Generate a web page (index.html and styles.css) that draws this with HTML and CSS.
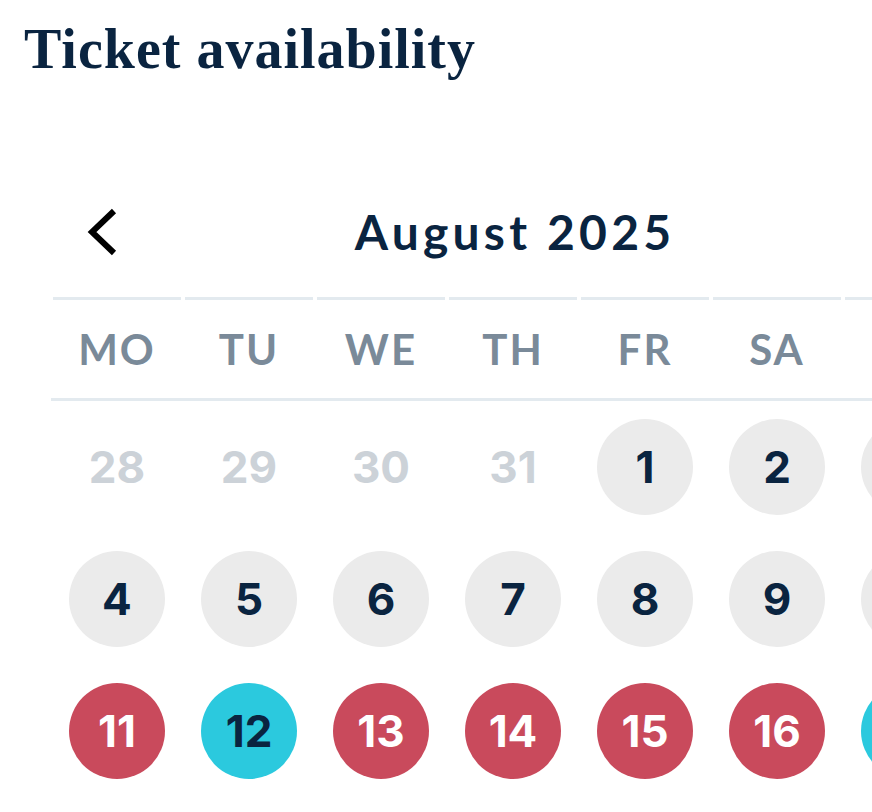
FILE: index.html
```html
<!DOCTYPE html>
<html lang="en">
<head>
<meta charset="utf-8">
<title>Ticket availability</title>
<link rel="stylesheet" href="styles.css">
</head>
<body>
<div class="page">
  <h1 class="title">Ticket availability</h1>
  <section class="calendar">
    <div class="cal-head">
      <button class="nav prev" aria-label="Previous month">
        <svg width="32" height="50" viewBox="0 0 32 50"><polyline points="28,4 6,25 28,46" fill="none" stroke="#000" stroke-width="6" stroke-linecap="butt" stroke-linejoin="miter"/></svg>
      </button>
      <h2 class="month">August 2025</h2>
      <button class="nav next" aria-label="Next month">
        <svg width="32" height="50" viewBox="0 0 32 50"><polyline points="4,4 26,25 4,46" fill="none" stroke="#000" stroke-width="6"/></svg>
      </button>
    </div>
    <div class="weekdays">
      <div class="wd">MO</div>
      <div class="wd">TU</div>
      <div class="wd">WE</div>
      <div class="wd">TH</div>
      <div class="wd">FR</div>
      <div class="wd">SA</div>
      <div class="wd">SU</div>
    </div>
    <div class="days">
      <div class="day"><span class="muted">28</span></div>
      <div class="day"><span class="muted">29</span></div>
      <div class="day"><span class="muted">30</span></div>
      <div class="day"><span class="muted">31</span></div>
      <div class="day"><span class="dot grey">1</span></div>
      <div class="day"><span class="dot grey">2</span></div>
      <div class="day"><span class="dot grey">3</span></div>

      <div class="day"><span class="dot grey">4</span></div>
      <div class="day"><span class="dot grey">5</span></div>
      <div class="day"><span class="dot grey">6</span></div>
      <div class="day"><span class="dot grey">7</span></div>
      <div class="day"><span class="dot grey">8</span></div>
      <div class="day"><span class="dot grey">9</span></div>
      <div class="day"><span class="dot grey">10</span></div>

      <div class="day"><span class="dot red">11</span></div>
      <div class="day"><span class="dot cyan">12</span></div>
      <div class="day"><span class="dot red">13</span></div>
      <div class="day"><span class="dot red">14</span></div>
      <div class="day"><span class="dot red">15</span></div>
      <div class="day"><span class="dot red">16</span></div>
      <div class="day"><span class="dot cyan">17</span></div>
    </div>
  </section>
</div>
</body>
</html>
```
FILE: styles.css
```css
html, body {
  margin: 0;
  padding: 0;
  background: #ffffff;
  overflow: hidden;
}
.page {
  width: 872px;
  height: 812px;
  overflow: hidden;
  box-sizing: border-box;
  padding: 17px 0 0 24px;
}
.title {
  margin: 0;
  font-family: "Liberation Serif", "Times New Roman", serif;
  font-weight: 700;
  font-size: 56px;
  line-height: 64px;
  letter-spacing: 1px;
  color: #0a2440;
  white-space: nowrap;
}
.calendar {
  margin: 121px 0 0 27px;
  width: 924px;
  font-family: "Lato", "Inter", sans-serif;
}
.cal-head {
  display: grid;
  grid-template-columns: 1fr auto 1fr;
  align-items: center;
  height: 60px;
}
.nav {
  background: none;
  border: 0;
  padding: 0;
  width: 32px;
  height: 50px;
  display: block;
  cursor: pointer;
}
.nav svg { display: block; }
.prev { justify-self: start; margin-left: 35px; }
.next { justify-self: end; margin-right: 35px; }
.month {
  margin: 0;
  padding-left: 4px;
  font-size: 48px;
  font-weight: 700;
  letter-spacing: 4.2px;
  color: #0a2440;
  line-height: 60px;
}
.weekdays {
  display: grid;
  grid-template-columns: repeat(7, 132px);
  margin-top: 35px;
  border-bottom: 3px solid #e3eaef;
}
.wd {
  margin: 0 2px;
  border-top: 3px solid #e3eaef;
  height: 98px;
  display: flex;
  align-items: center;
  justify-content: center;
  font-size: 42px;
  font-weight: 700;
  letter-spacing: 2px;
  color: #7a8a99;
}
.days {
  display: grid;
  grid-template-columns: repeat(7, 132px);
  grid-auto-rows: 132px;
}
.day {
  display: flex;
  align-items: center;
  justify-content: center;
}
.day span {
  width: 96px;
  height: 96px;
  border-radius: 50%;
  display: flex;
  align-items: center;
  justify-content: center;
  font-family: "Inter", "Lato", sans-serif;
  font-size: 44px;
  font-weight: 700;
  letter-spacing: 0;
  color: #0a2440;
}
.day .muted { color: #ccd2d8; }
.grey { background: #ebebeb; }
.red { background: #c94a5c; color: #ffffff !important; }
.cyan { background: #2bc9de; }
```
